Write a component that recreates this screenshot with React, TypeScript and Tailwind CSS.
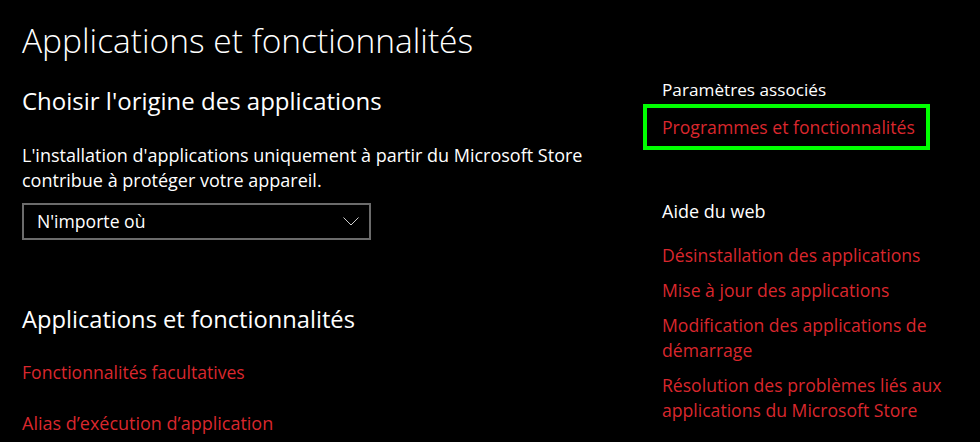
import React from "react";

const red = "text-[#d9272d]";

export default function App() {
  return (
    <div className="w-[980px] h-[442px] bg-black flex overflow-hidden text-white" style={{ fontFamily: "'Open Sans', 'Noto Sans', sans-serif" }}>
      <div className="w-[621px] pl-[22px] flex flex-col">
        <h1 className="mt-[18px] text-[33.5px] leading-[44px] font-light whitespace-nowrap">Applications et fonctionnalités</h1>
        <h2 className="mt-[24px] text-[24px] leading-[30px] whitespace-nowrap">Choisir l'origine des applications</h2>
        <p className="mt-[27px] text-[18px] leading-[25px] whitespace-nowrap">
          L'installation d'applications uniquement à partir du Microsoft Store
          <br />
          contribue à protéger votre appareil.
        </p>
        <div className="mt-[10px] w-[349px] h-[37px] border-2 border-[#6b6b6b] flex items-center justify-between pl-[13px] pr-[10px]">
          <span className="text-[17.6px]">N'importe où</span>
          <svg width="16" height="9" viewBox="0 0 16 9" fill="none">
            <path d="M0.5 0.5 L8 8 L15.5 0.5" stroke="#cfcfcf" strokeWidth="1" />
          </svg>
        </div>
        <h2 className="mt-[64px] text-[23.7px] leading-[30px] whitespace-nowrap">Applications et fonctionnalités</h2>
        <a className={`mt-[26px] text-[17.6px] leading-[25px] ${red}`}>Fonctionnalités facultatives</a>
        <a className={`mt-[26px] text-[18px] leading-[25px] ${red}`}>Alias d’exécution d’application</a>
      </div>
      <div className="flex-1 flex flex-col">
        <div className="mt-[77px] pl-[41px] text-[17.2px] leading-[25px]">Paramètres associés</div>
        <div className="mt-[2px] ml-[22px] w-[287px] h-[46px] border-4 border-[#00ff00] flex items-center pl-[15px]">
          <a className={`text-[17.6px] leading-[25px] whitespace-nowrap ${red}`}>Programmes et fonctionnalités</a>
        </div>
        <div className="mt-[49px] pl-[41px] text-[18px] leading-[25px]">Aide du web</div>
        <div className={`mt-[19px] pl-[41px] flex flex-col gap-[10px] text-[17.6px] leading-[25px] whitespace-nowrap ${red}`}>
          <a>Désinstallation des applications</a>
          <a>Mise à jour des applications</a>
          <a>Modification des applications de<br />démarrage</a>
          <a>Résolution des problèmes liés aux<br />applications du Microsoft Store</a>
        </div>
      </div>
    </div>
  );
}
